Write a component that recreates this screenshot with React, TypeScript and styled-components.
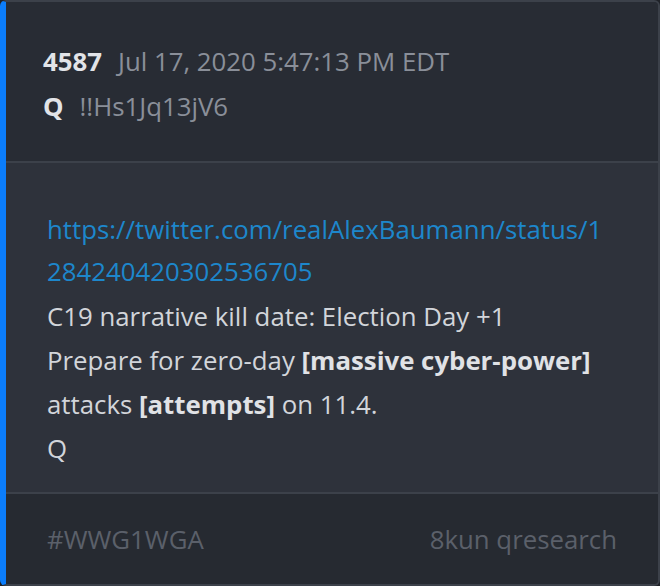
import React from "react";
import styled, { createGlobalStyle } from "styled-components";

const Global = createGlobalStyle`
  html, body { margin: 0; padding: 0; background: #1f2228; }
  body { font-family: "Open Sans", "Noto Sans", sans-serif; }
  * { box-sizing: border-box; }
`;

const Card = styled.article`
  width: 660px;
  height: 586px;
  display: flex;
  flex-direction: column;
  background: #2e323b;
  border: 2px solid #3c414a;
  border-left: 6px solid #0b7dfb;
  border-radius: 6px;
  overflow: hidden;
  font-size: 25.8px;
`;

const Header = styled.header`
  display: flex;
  flex-direction: column;
  gap: 1px;
  padding: 37px 37px 0;
  height: 161px;
  background: #282c34;
  border-bottom: 2px solid #3c414a;
`;

const MetaRow = styled.div`
  display: flex;
  align-items: baseline;
  gap: 16px;
  line-height: 44px;
`;

const Strong = styled.span`
  font-weight: 700;
  color: #e2e4e8;
`;

const Muted = styled.span`
  color: #8a8f99;
`;

const Body = styled.section`
  flex: 1;
  padding: 45px 48px 0 41px;
  line-height: 44px;
  color: #d2d5da;
`;

const Link = styled.a`
  color: #1d87cc;
  text-decoration: none;
  display: block;
  word-break: break-all;
  line-height: 42px;
  margin-bottom: 2px;
`;

const Line = styled.div``;

const B = styled.b`
  font-weight: 700;
  color: #e0e2e6;
`;

const Footer = styled.footer`
  height: 92px;
  display: flex;
  align-items: center;
  justify-content: space-between;
  padding: 0 41px;
  background: #262a31;
  border-top: 2px solid #3c414a;
  color: #5b606a;
`;

export default function App() {
  return (
    <>
      <Global />
      <Card>
        <Header>
          <MetaRow>
            <Strong>4587</Strong>
            <Muted>Jul 17, 2020 5:47:13 PM EDT</Muted>
          </MetaRow>
          <MetaRow>
            <Strong>Q</Strong>
            <Muted>!!Hs1Jq13jV6</Muted>
          </MetaRow>
        </Header>
        <Body>
          <Link href="#">https://twitter.com/realAlexBaumann/status/1284240420302536705</Link>
          <Line>C19 narrative kill date: Election Day +1</Line>
          <Line>
            Prepare for zero-day <B>[massive cyber-power]</B> attacks <B>[attempts]</B> on 11.4.
          </Line>
          <Line>Q</Line>
        </Body>
        <Footer>
          <span>#WWG1WGA</span>
          <span>8kun qresearch</span>
        </Footer>
      </Card>
    </>
  );
}
